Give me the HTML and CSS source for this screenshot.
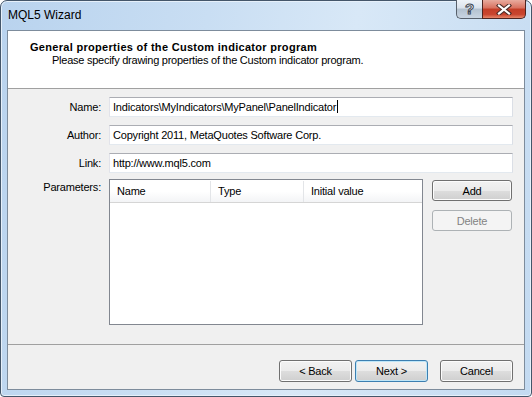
FILE: index.html
```html
<!DOCTYPE html>
<html lang="en">
<head>
    <meta charset="UTF-8">
    <title>MQL5 Wizard</title>
    <link rel="stylesheet" href="styles.css">
</head>
<body>
    <div class="window">
        <div class="titlebar">
            <span class="title">MQL5 Wizard</span>
            <div class="caption-buttons">
                <div class="cap-help">?</div>
                <div class="cap-close">
                    <svg width="16" height="11" viewBox="0 0 16 11">
                        <path d="M3 1.5 L13 9.5 M13 1.5 L3 9.5" stroke="#4a2a26" stroke-width="4.2" stroke-linecap="square"/>
                        <path d="M3 1.5 L13 9.5 M13 1.5 L3 9.5" stroke="#ffffff" stroke-width="2.2" stroke-linecap="square"/>
                    </svg>
                </div>
            </div>
        </div>

        <div class="client">
            <div class="header">
                <h1>General properties of the Custom indicator program</h1>
                <p>Please specify drawing properties of the Custom indicator program.</p>
            </div>

            <div class="form">
                <div class="row">
                    <label>Name:</label>
                    <div class="textbox">Indicators\MyIndicators\MyPanel\PanelIndicator<span class="caret"></span></div>
                </div>
                <div class="row">
                    <label>Author:</label>
                    <div class="textbox">Copyright 2011, MetaQuotes Software Corp.</div>
                </div>
                <div class="row row-last">
                    <label>Link:</label>
                    <div class="textbox">http://www.mql5.com</div>
                </div>
                <div class="row row-params">
                    <label>Parameters:</label>
                    <div class="list">
                        <div class="list-header">
                            <div class="col col-name">Name</div>
                            <div class="col col-type">Type</div>
                            <div class="col col-value">Initial value</div>
                        </div>
                    </div>
                    <div class="side-buttons">
                        <button class="btn">Add</button>
                        <button class="btn" disabled>Delete</button>
                    </div>
                </div>
            </div>

            <div class="footer">
                <button class="btn btn-wide">&lt; Back</button>
                <button class="btn btn-wide btn-default">Next &gt;</button>
                <button class="btn btn-wide btn-cancel">Cancel</button>
            </div>
        </div>
    </div>
</body>
</html>
```

FILE: styles.css
```css
body {
    margin: 0;
    padding: 0;
    background-color: #ffffff;
    font-family: "Liberation Sans", Arial, sans-serif;
    font-size: 11px;
    letter-spacing: -0.2px;
    color: #000;
}

/* Window frame */
.window {
    width: 532px;
    height: 397px;
    box-sizing: border-box;
    border: 1px solid #44566a;
    border-radius: 7px 7px 4px 4px;
    background: linear-gradient(100deg, #b9d3ee 0%, #c9def3 35%, #d8e8f7 60%, #c3daf1 100%);
    box-shadow: inset 0 0 0 1px #e6f0fa;
    display: flex;
    flex-direction: column;
}

.titlebar {
    height: 29px;
    display: flex;
    justify-content: space-between;
    align-items: flex-start;
    padding: 0 5px 0 7px;
}

.title {
    font-size: 12px;
    letter-spacing: 0;
    color: #000;
    margin-top: 7px;
}

.caption-buttons {
    display: flex;
    margin-top: -1px;
}

.cap-help {
    width: 25px;
    height: 18px;
    border: 1px solid #57606b;
    border-top: none;
    border-right: none;
    border-radius: 0 0 0 5px;
    background: linear-gradient(#eef3f8 0%, #d9e2ec 45%, #b3c1cf 50%, #c9d5e2 100%);
    color: #ffffff;
    font-size: 15px;
    font-weight: bold;
    text-align: center;
    line-height: 18px;
    -webkit-text-stroke: 1px #3c4552;
}

.cap-close {
    width: 42px;
    height: 18px;
    border: 1px solid #4d2420;
    border-top: none;
    border-radius: 0 0 5px 0;
    background: linear-gradient(#e8ab9e 0%, #d8705e 45%, #c33d27 50%, #c9452f 80%, #e6866a 100%);
    display: flex;
    align-items: center;
    justify-content: center;
}

/* Client area */
.client {
    flex: 1;
    margin: 0 6px 6px 6px;
    border: 1px solid #7d8c9c;
    background-color: #f0f0f0;
    display: flex;
    flex-direction: column;
}

.header {
    height: 57px;
    background-color: #ffffff;
    border-bottom: 1px solid #a0a0a0;
    padding: 0 0 0 22px;
}

.header h1 {
    font-size: 11px;
    font-weight: bold;
    letter-spacing: 0.3px;
    margin: 10px 0 0 0;
    line-height: 13px;
}

.header p {
    margin: 0 0 0 22px;
    line-height: 13px;
    letter-spacing: -0.25px;
}

/* Form */
.form {
    flex: 1;
    padding: 8px 11px 0 0;
}

.row {
    display: flex;
    align-items: center;
    margin-bottom: 8px;
}

.row-last {
    margin-bottom: 6px;
}

.row label {
    width: 93px;
    text-align: right;
    margin-right: 8px;
    flex-shrink: 0;
}

.textbox {
    flex: 1;
    height: 20px;
    box-sizing: border-box;
    border: 1px solid #abadb3;
    border-left-color: #e2e3ea;
    border-right-color: #dbdfe6;
    border-bottom-color: #e3e9ef;
    background-color: #fff;
    padding: 0 3px;
    line-height: 18px;
    white-space: nowrap;
}

.caret {
    display: inline-block;
    width: 1px;
    height: 13px;
    background-color: #000;
    vertical-align: -2px;
    margin-left: 1px;
}

.row-params {
    align-items: flex-start;
    margin-bottom: 0;
}

.row-params label {
    padding-top: 2px;
}

.list {
    width: 314px;
    height: 146px;
    box-sizing: border-box;
    border: 1px solid #828790;
    background-color: #fff;
    padding-top: 1px;
}

.list-header {
    display: flex;
    height: 22px;
    box-sizing: border-box;
    border-bottom: 1px solid #d5d5d5;
    background: linear-gradient(#ffffff 0%, #ffffff 50%, #f3f4f6 100%);
}

.col {
    padding-left: 7px;
    line-height: 21px;
    border-right: 1px solid #e3e5e8;
}

.col-name {
    width: 93px;
}

.col-type {
    width: 85px;
}

.col-value {
    flex: 1;
    border-right: none;
}

.side-buttons {
    display: flex;
    flex-direction: column;
    gap: 9px;
    margin-left: 9px;
    margin-top: 1px;
}

/* Buttons */
.btn {
    width: 80px;
    height: 21px;
    box-sizing: border-box;
    border: 1px solid #707070;
    border-radius: 3px;
    background: linear-gradient(#f2f2f2 0%, #ebebeb 50%, #dddddd 51%, #cfcfcf 100%);
    box-shadow: inset 0 0 0 1px #fcfcfc;
    font-family: "Liberation Sans", Arial, sans-serif;
    font-size: 11px;
    letter-spacing: -0.2px;
    color: #000;
    padding: 0;
}

.btn:disabled {
    border-color: #adb2b5;
    background: #f4f4f4;
    box-shadow: none;
    color: #838383;
}

.footer {
    height: 45px;
    box-sizing: border-box;
    border-top: 1px solid #a0a0a0;
    display: flex;
    justify-content: flex-end;
    align-items: flex-start;
    padding: 15px 11px 0 0;
}

.btn-wide {
    width: 73px;
    height: 22px;
    margin-left: 3px;
}

.btn-default {
    border-color: #3c7fb1;
    box-shadow: inset 0 0 0 1px #bfe6f8;
}

.btn-cancel {
    margin-left: 12px;
}
```
